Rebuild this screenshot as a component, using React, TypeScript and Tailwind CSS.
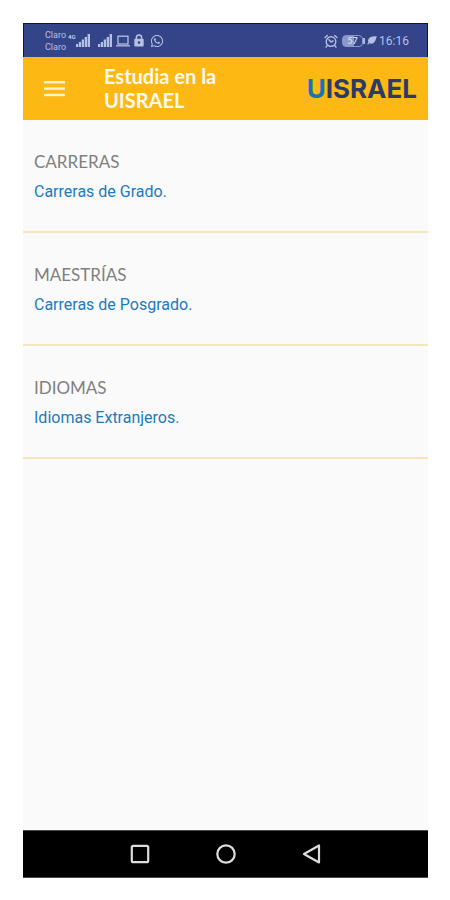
import { useState } from 'react'
import { FaWhatsapp } from 'react-icons/fa'

type Section = {
  id: string
  title: string
  link: string
}

const SECTIONS: Section[] = [
  { id: 'carreras', title: 'CARRERAS', link: 'Carreras de Grado.' },
  { id: 'maestrias', title: 'MAESTRÍAS', link: 'Carreras de Posgrado.' },
  { id: 'idiomas', title: 'IDIOMAS', link: 'Idiomas Extranjeros.' },
]

function SignalIcon() {
  return (
    <svg viewBox="0 0 14 13" className="h-[13px] w-[14px]" fill="currentColor">
      <rect x="0" y="10" width="2.2" height="3" />
      <rect x="2.8" y="8" width="2.2" height="5" />
      <rect x="5.7" y="5.5" width="2.3" height="7.5" />
      <rect x="8.7" y="3" width="2.3" height="10" />
      <rect x="11.6" y="0" width="2.4" height="13" />
    </svg>
  )
}

function LaptopIcon() {
  return (
    <svg viewBox="0 0 14 12" className="h-3 w-[14px]" fill="none" stroke="currentColor" strokeWidth="1.3">
      <rect x="2" y="1.2" width="10" height="7.8" />
      <path d="M0 10.8h14" />
    </svg>
  )
}

function LockIcon() {
  return (
    <svg viewBox="0 0 10 13" className="h-[13px] w-[10px]">
      <path d="M2.4 5.5V3.6a2.6 2.6 0 0 1 5.2 0v1.9" fill="none" stroke="currentColor" strokeWidth="1.5" />
      <path
        fillRule="evenodd"
        fill="currentColor"
        d="M1.2 4.8h7.6a.9.9 0 0 1 .9.9v5.9a.9.9 0 0 1-.9.9H1.2a.9.9 0 0 1-.9-.9V5.7a.9.9 0 0 1 .9-.9zM5 7.3a1.3 1.3 0 1 0 0 2.6 1.3 1.3 0 0 0 0-2.6z"
      />
    </svg>
  )
}

function AlarmIcon() {
  return (
    <svg viewBox="0 0 14 14" className="h-[14px] w-[14px]" fill="none" stroke="currentColor" strokeWidth="1.4" strokeLinecap="round">
      <circle cx="7" cy="7.6" r="4.8" />
      <path d="M4.9 5.8 7 7.9l2.1-.9M1 3.6 3.4 1.4M13 3.6l-2.4-2.2M3.2 11.8 2 13M10.8 11.8 12 13" />
    </svg>
  )
}

function LeafIcon() {
  return (
    <svg viewBox="0 0 10 9" className="h-[9px] w-[10px]" fill="currentColor">
      <path d="M9.8.3C5.4 0 2 .9 1.2 3.7c-.3.9-.2 1.8.2 2.5L.2 8.3l.9.5 1.2-1.5c1.2.6 3.1.5 4.5-.5C8.9 5.2 8.8 2.4 9.8.3z" />
    </svg>
  )
}

function StatusBar() {
  return (
    <div className="flex h-[34px] items-center justify-between border border-b-0 border-[#0c0c78] bg-[#344489] pl-[21px] pr-[18px] text-[#b6c0e4]">
      <div className="flex items-center">
        <div className="font-[Roboto,sans-serif] text-[9px] leading-3">
          <div>Claro</div>
          <div>Claro</div>
        </div>
        <span className="mb-2 ml-0.5 font-[Roboto,sans-serif] text-[6px] leading-none font-black">4G</span>
        <SignalIcon />
        <div className="ml-2 flex items-center gap-1">
          <SignalIcon />
          <LaptopIcon />
          <LockIcon />
          <FaWhatsapp className="ml-0.5 size-[14px]" />
        </div>
      </div>
      <div className="flex items-center">
        <AlarmIcon />
        <div className="ml-1 flex items-center">
          <div className="flex h-3 w-[21px] items-center justify-center rounded-sm border border-[#8c98c8] bg-linear-to-r from-[#8c98c8] from-60% to-transparent to-60% text-[9px] leading-none font-bold text-[#d3d9ef]">
            57
          </div>
          <div className="h-1.5 w-0.5 bg-[#aeb8de]" />
        </div>
        <div className="ml-0.5">
          <LeafIcon />
        </div>
        <span className="ml-0.5 font-[Roboto,sans-serif] text-xs leading-4">16:16</span>
      </div>
    </div>
  )
}

function Header({ onMenu }: { onMenu: () => void }) {
  return (
    <header className="flex h-[63px] items-center bg-[#fdb813] pl-[21px] pr-[11px]">
      <button type="button" aria-label="Menú" onClick={onMenu} className="text-[#fff3cf]">
        <svg viewBox="0 0 21 16" className="h-4 w-[21px]" fill="currentColor">
          <rect x="0" y="0" width="21" height="2.4" />
          <rect x="0" y="6.4" width="21" height="2.4" />
          <rect x="0" y="12.8" width="21" height="2.4" />
        </svg>
      </button>
      <h1 className="ml-[39px] w-32 pb-0.5 text-xl leading-6 font-bold text-[#fffaec]">Estudia en la UISRAEL</h1>
      <div className="ml-auto font-[Inter,sans-serif] text-[26px] leading-8 font-bold text-[#2d3a68]">
        <span className="text-[#1474b8]">U</span>ISRAEL
      </div>
    </header>
  )
}

function NavBar() {
  return (
    <nav className="grid h-12 grid-cols-[1fr_86px_86px_86px_1fr] items-center border-y border-[#4a4a4a] bg-black text-[#dcdcdc]">
      <button type="button" aria-label="Recientes" className="col-start-2 flex justify-center">
        <svg viewBox="0 0 20 20" className="size-5" fill="none" stroke="currentColor" strokeWidth="2.2">
          <rect x="1.8" y="1.8" width="16.4" height="16.4" rx="1.5" />
        </svg>
      </button>
      <button type="button" aria-label="Inicio" className="flex justify-center">
        <svg viewBox="0 0 20 20" className="size-5" fill="none" stroke="currentColor" strokeWidth="2.2">
          <circle cx="10" cy="10" r="8.7" />
        </svg>
      </button>
      <button type="button" aria-label="Atrás" className="flex justify-center">
        <svg viewBox="0 0 20 20" className="size-5" fill="none" stroke="currentColor" strokeWidth="2.2" strokeLinejoin="round">
          <path d="M17 1.5v17L2 10z" />
        </svg>
      </button>
    </nav>
  )
}

export default function App() {
  const [menuOpen, setMenuOpen] = useState(false)

  return (
    <div className="flex min-h-screen flex-col bg-white pt-[23px] pr-[22px] pb-[22px] pl-[23px] font-[Lato,sans-serif]">
      <div className="flex flex-1 flex-col bg-[#fafafa]">
        <StatusBar />
        <Header onMenu={() => setMenuOpen(!menuOpen)} />
        <main className="flex-1">
          {SECTIONS.map(s => (
            <section key={s.id} className="h-[113px] border-b-2 border-[#f3e6bd] px-[11px] pt-[30px]">
              <h2 className="text-[17px] leading-6 text-[#808080]">{s.title}</h2>
              <a href={`#${s.id}`} className="mt-1.5 block font-[Roboto,sans-serif] text-base leading-6 text-[#1c7abf]">
                {s.link}
              </a>
            </section>
          ))}
        </main>
        <NavBar />
      </div>
    </div>
  )
}
